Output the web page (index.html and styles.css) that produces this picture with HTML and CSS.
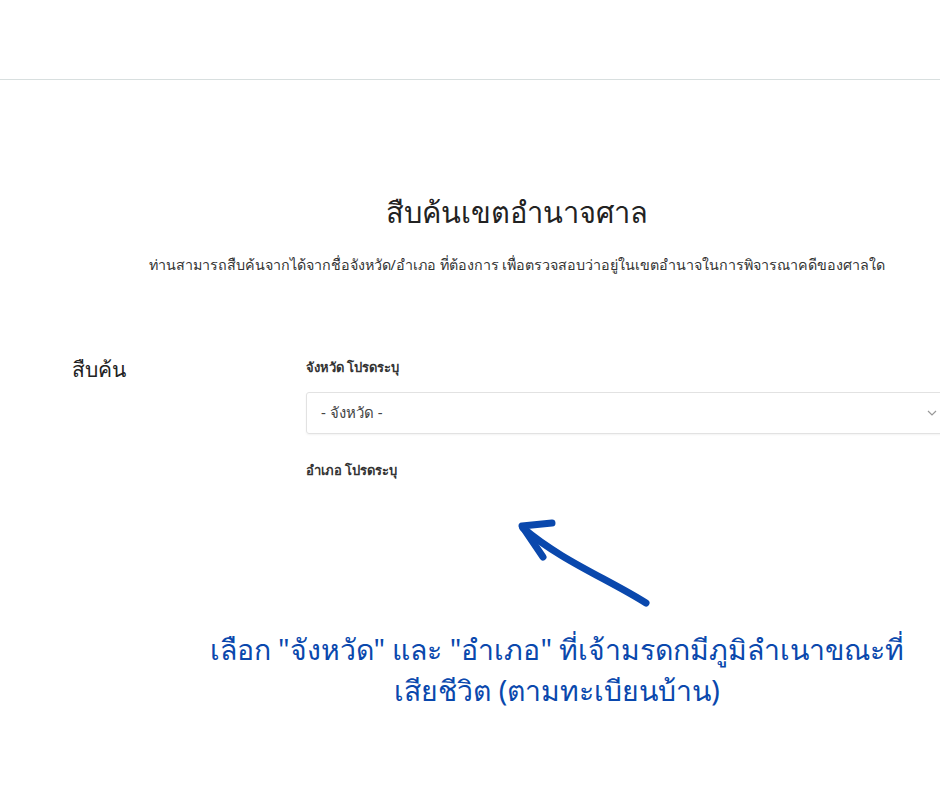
FILE: index.html
```html
<!DOCTYPE html>
<html lang="th">
<head>
<meta charset="UTF-8">
<meta name="viewport" content="width=device-width, initial-scale=1.0">
<title>สืบค้นเขตอำนาจศาล</title>
<link rel="stylesheet" href="styles.css">
</head>
<body>

<div class="topbar"></div>

<div class="intro">
    <h1 class="title">สืบค้นเขตอำนาจศาล</h1>
    <p class="subtitle">ท่านสามารถสืบค้นจากได้จากชื่อจังหวัด/อำเภอ ที่ต้องการ เพื่อตรวจสอบว่าอยู่ในเขตอำนาจในการพิจารณาคดีของศาลใด</p>
</div>

<div class="search-row">
    <div class="search-head">สืบค้น</div>
    <div class="search-form">
        <label class="field-label">จังหวัด โปรดระบุ</label>
        <div class="select-box">
            <span>- จังหวัด -</span>
            <svg class="chev" width="10" height="8" viewBox="0 0 10 8"><path d="M1 2 L5 6 L9 2" fill="none" stroke="#999" stroke-width="1.2"/></svg>
        </div>
        <label class="field-label">อำเภอ โปรดระบุ</label>
    </div>
</div>

<svg class="arrow" width="940" height="788" viewBox="0 0 940 788">
    <path d="M646 603 C610 580 560 560 523 528" fill="none" stroke="#0a48ad" stroke-width="7" stroke-linecap="round"/>
    <path d="M552 523 L522 526 L543 557" fill="none" stroke="#0a48ad" stroke-width="7" stroke-linecap="round" stroke-linejoin="round"/>
</svg>

<div class="note">เลือก "จังหวัด" และ "อำเภอ" ที่เจ้ามรดกมีภูมิลำเนาขณะที่<br>เสียชีวิต (ตามทะเบียนบ้าน)</div>

</body>
</html>
```

FILE: styles.css
```css
body {
    margin: 0;
    background: #fff;
    font-family: "Noto Sans", "Liberation Sans", sans-serif;
    color: #222;
    overflow: hidden;
    width: 940px;
    height: 788px;
    position: relative;
}
.topbar {
    height: 79px;
    border-bottom: 1px solid #d8dfdf;
}
.intro {
    padding-left: 94px;
    text-align: center;
}
.title {
    margin: 110px 0 0;
    font-size: 29px;
    font-weight: normal;
    color: #222;
    line-height: 44px;
}
.subtitle {
    margin: 20px 0 0;
    font-size: 14.3px;
    color: #333;
    line-height: 22px;
    white-space: nowrap;
}
.search-row {
    display: flex;
    margin-top: 75px;
    overflow: hidden;
}
.search-head {
    width: 234px;
    flex: none;
    padding-left: 72px;
    font-size: 21px;
    line-height: 36px;
    color: #222;
}
.search-form {
    flex: 1;
    min-width: 0;
}
.field-label {
    display: block;
    font-size: 13px;
    font-weight: 600;
    color: #333;
    line-height: 20px;
    margin-top: 6px;
}
.select-box {
    display: flex;
    align-items: center;
    justify-content: space-between;
    width: 644px;
    height: 42px;
    margin: 15px 0 26px;
    padding: 0 12px 0 14px;
    box-sizing: border-box;
    border: 1px solid #e2e2e2;
    border-radius: 3px;
    box-shadow: 0 1px 2px rgba(0,0,0,0.05);
    font-size: 15px;
    color: #444;
}
.arrow {
    position: absolute;
    left: 0;
    top: 0;
}
.note {
    position: absolute;
    left: 157px;
    top: 629px;
    width: 800px;
    text-align: center;
    font-size: 28.4px;
    line-height: 41px;
    color: #0a48ad;
}
```
